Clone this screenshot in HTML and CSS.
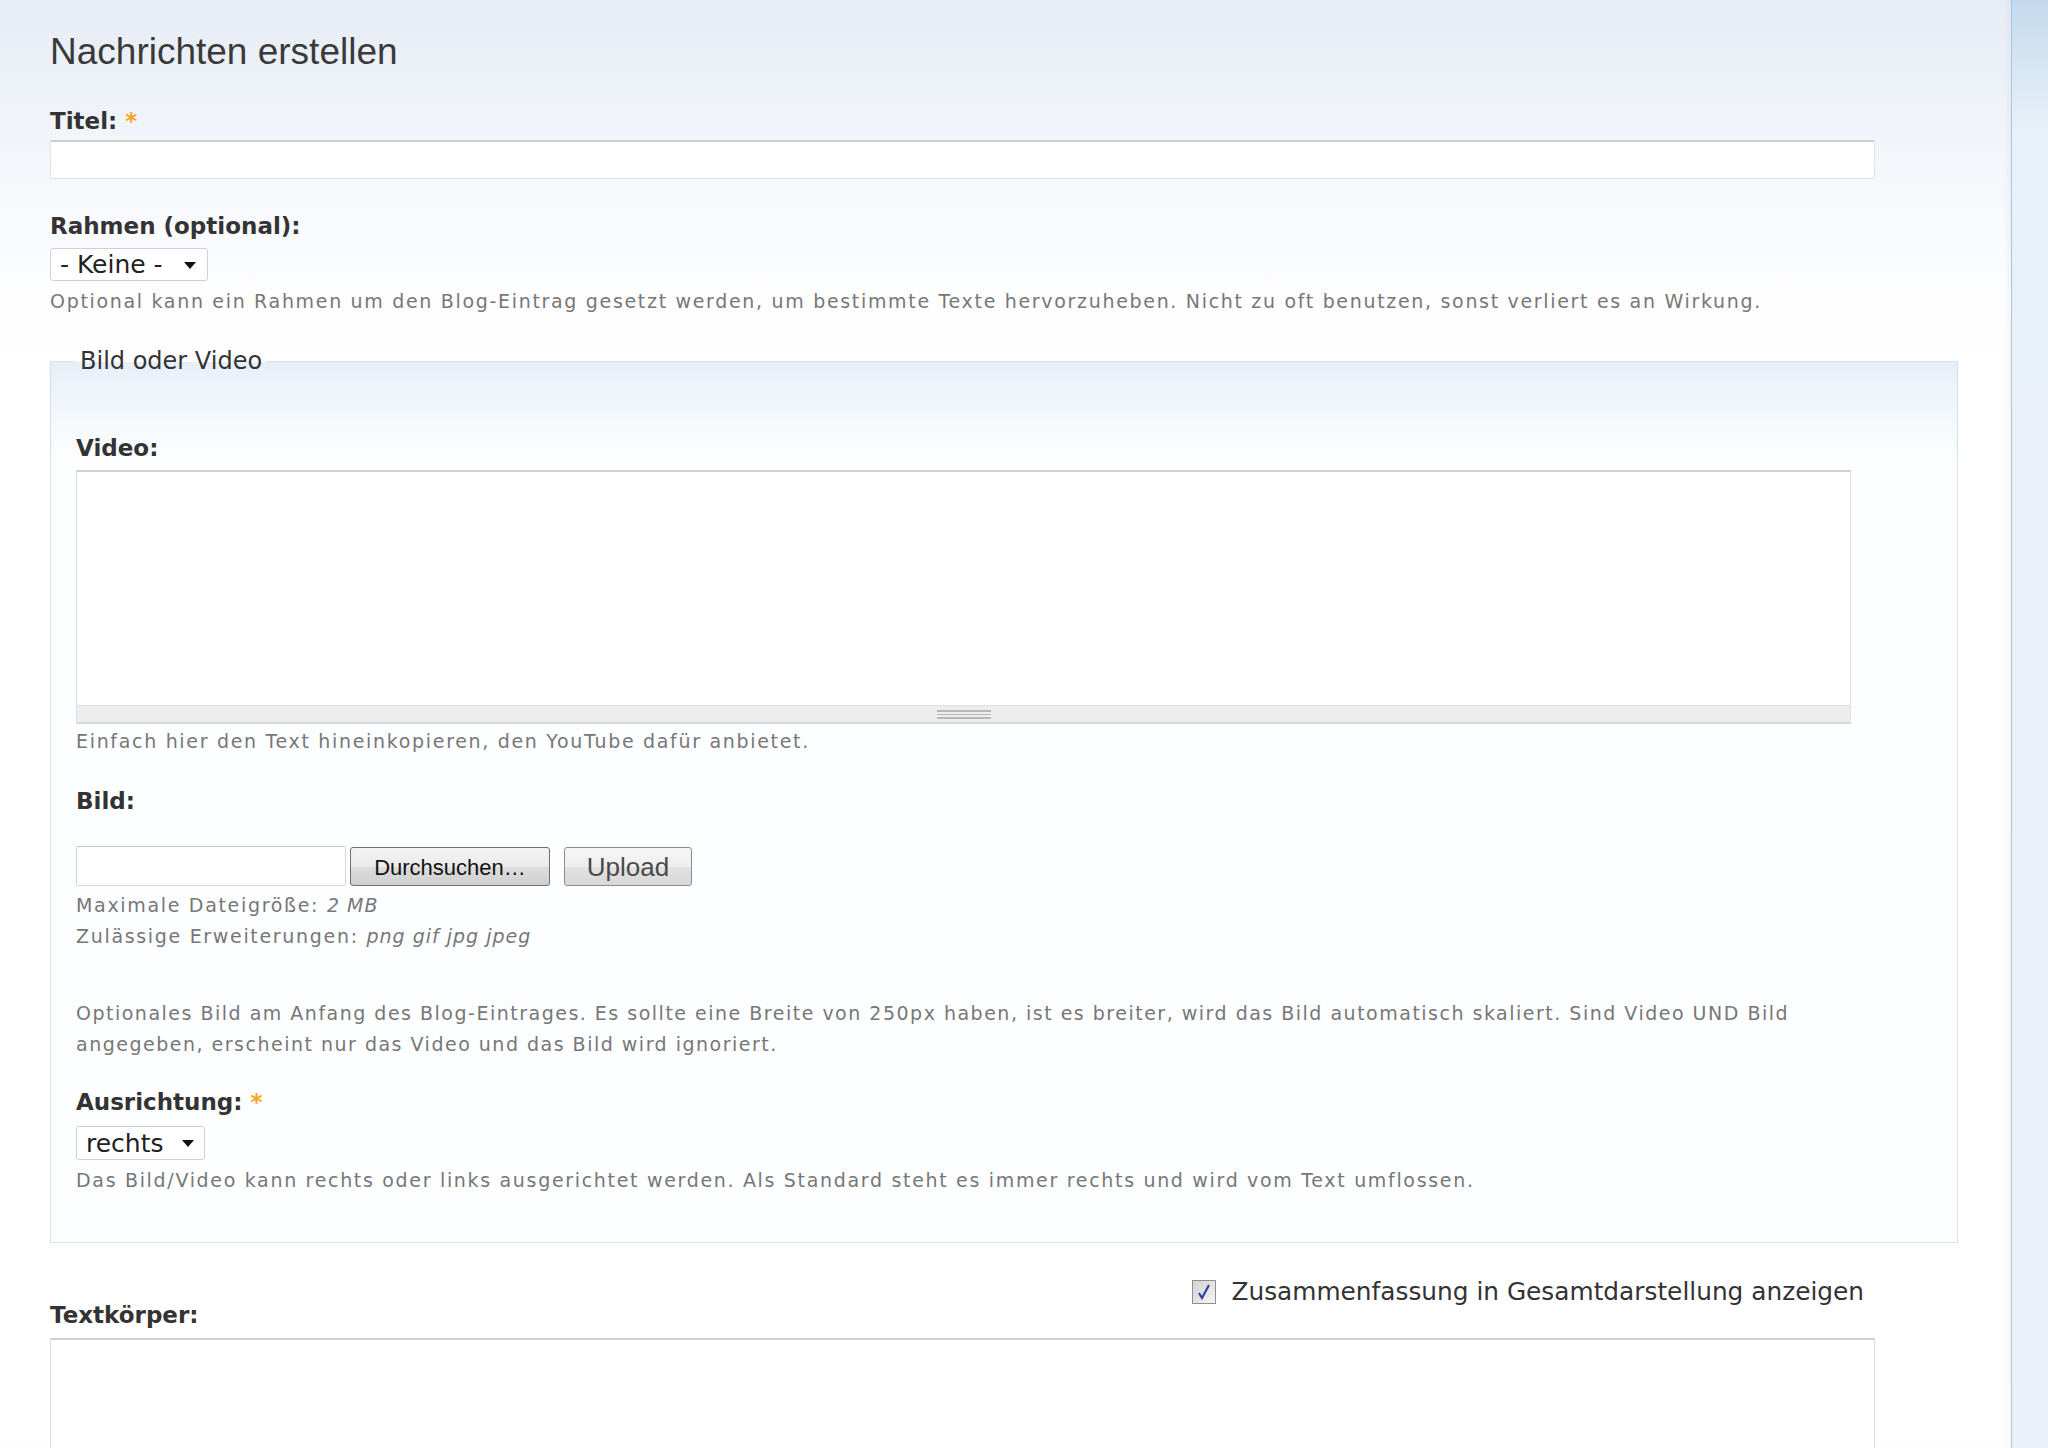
FILE: index.html
```html
<!DOCTYPE html>
<html lang="de">
<head>
    <meta charset="UTF-8">
    <title>Nachrichten erstellen</title>
    <link rel="stylesheet" href="styles.css">
</head>
<body>
    <div class="layout">
        <main class="content">
            <h1>Nachrichten erstellen</h1>

            <form class="node-form">
                <div class="form-item item-title">
                    <label>Titel: <span class="required">*</span></label>
                    <input type="text" class="form-text wide">
                </div>

                <div class="form-item item-frame">
                    <label>Rahmen (optional):</label>
                    <div class="select select-frame">
                        <span>- Keine -</span>
                        <svg width="12" height="8" viewBox="0 0 12 8"><path d="M0 1h12L6 8z" fill="#111"/></svg>
                    </div>
                    <div class="description">Optional kann ein Rahmen um den Blog-Eintrag gesetzt werden, um bestimmte Texte hervorzuheben. Nicht zu oft benutzen, sonst verliert es an Wirkung.</div>
                </div>

                <fieldset class="group">
                    <legend>Bild oder Video</legend>

                    <div class="form-item item-video">
                        <label>Video:</label>
                        <textarea class="form-textarea video-text"></textarea>
                        <div class="grippie"><span></span></div>
                        <div class="description">Einfach hier den Text hineinkopieren, den YouTube dafür anbietet.</div>
                    </div>

                    <div class="form-item item-image">
                        <label>Bild:</label>
                        <div class="upload-row">
                            <div class="file-box"></div>
                            <button type="button" class="btn-browse">Durchsuchen…</button>
                            <button type="button" class="btn-upload">Upload</button>
                        </div>
                        <div class="description">
                            Maximale Dateigröße: <em>2 MB</em><br>
                            Zulässige Erweiterungen: <em>png gif jpg jpeg</em>
                        </div>
                        <div class="description long-desc">Optionales Bild am Anfang des Blog-Eintrages. Es sollte eine Breite von 250px haben, ist es breiter, wird das Bild automatisch skaliert. Sind Video UND Bild angegeben, erscheint nur das Video und das Bild wird ignoriert.</div>
                    </div>

                    <div class="form-item item-align">
                        <label>Ausrichtung: <span class="required">*</span></label>
                        <div class="select select-align">
                            <span>rechts</span>
                            <svg width="12" height="8" viewBox="0 0 12 8"><path d="M0 1h12L6 8z" fill="#111"/></svg>
                        </div>
                        <div class="description">Das Bild/Video kann rechts oder links ausgerichtet werden. Als Standard steht es immer rechts und wird vom Text umflossen.</div>
                    </div>
                </fieldset>

                <div class="body-head">
                    <label>Textkörper:</label>
                    <div class="teaser-check">
                        <span class="checkbox">
                            <svg width="14" height="16" viewBox="0 0 14 16"><path d="M2 9l3 5L12 1" fill="none" stroke="#3340a0" stroke-width="2.2"/></svg>
                        </span>
                        <span>Zusammenfassung in Gesamtdarstellung anzeigen</span>
                    </div>
                </div>
                <textarea class="form-textarea body-text"></textarea>
            </form>
        </main>
        <aside class="sidebar"></aside>
    </div>
</body>
</html>
```

FILE: styles.css
```css
html, body {
    margin: 0;
    height: 100%;
    overflow: hidden;
}

body {
    font-family: 'DejaVu Sans', Verdana, sans-serif;
    color: #333;
    background: #fff;
}

.layout {
    display: flex;
    height: 1448px;
}

.content {
    flex: 1;
    padding: 30px 0 0 50px;
    background: linear-gradient(#e7edf6 0px, #f4f7fb 170px, #fefeff 300px, #fff 420px);
    box-shadow: inset -6px 0 6px -4px rgba(120, 150, 180, 0.12);
}

.sidebar {
    width: 36px;
    border-left: 1px solid #a9c5df;
    background: linear-gradient(#c3d9ed 0px, #dbe8f4 80px, #e8f0f8 130px, #eaf1f8 100%);
}

h1 {
    margin: 0;
    font-family: 'Liberation Sans', Arial, sans-serif;
    font-size: 37px;
    font-weight: normal;
    line-height: 44px;
    color: #3a3a3a;
}

/* Form items */
.form-item label,
.body-head label {
    display: block;
    font-weight: bold;
    font-size: 23px;
    line-height: 28px;
    color: #333;
}

.required {
    color: #f6a623;
}

.item-title { margin-top: 33px; }
.item-title label { margin-bottom: 5px; }

.item-frame { margin-top: 33px; }
.item-frame label { margin-bottom: 8px; }

.form-text {
    box-sizing: border-box;
    display: block;
    height: 39px;
    border: 1px solid #e2e2e2;
    border-top: 2px solid #cdcdcd;
    border-radius: 2px;
    background: #fff;
}

.wide {
    width: 1825px;
}

.description {
    font-size: 19px;
    line-height: 31px;
    letter-spacing: 1.68px;
    color: #777;
    margin-top: 5px;
}

.description em {
    font-style: italic;
    letter-spacing: 1px;
}

/* Fake selects */
.select {
    box-sizing: border-box;
    display: flex;
    align-items: center;
    justify-content: space-between;
    background: #fff;
    border: 1px solid #d0d0d0;
    border-radius: 3px;
    font-size: 25px;
    color: #222;
}

.select-frame {
    width: 158px;
    height: 33px;
    padding: 0 11px 0 9px;
}

.select-align {
    width: 129px;
    height: 34px;
    padding: 0 10px 0 9px;
}

/* Fieldset */
.group {
    margin: 30px 0 0 0;
    width: 1908px;
    box-sizing: border-box;
    padding: 0 25px 46px 25px;
    border: 1px solid #d3e2f0;
    background: linear-gradient(#e6eff8 0px, #f5f9fc 60px, #fdfeff 100px);
}

.group legend {
    padding: 0 4px;
    font-size: 24px;
    line-height: 28px;
    margin-top: 2px;
    color: #333;
}

.item-video { margin-top: 59px; }
.item-video label { margin-bottom: 8px; }

.form-textarea {
    box-sizing: border-box;
    display: block;
    resize: none;
    border: 1px solid #e0e0e0;
    border-top: 2px solid #d0d0d0;
    background: #fff;
    margin: 0;
}

.video-text {
    width: 1775px;
    height: 235px;
    border-bottom: none;
}

.grippie {
    box-sizing: border-box;
    width: 1775px;
    height: 19px;
    display: flex;
    align-items: center;
    justify-content: center;
    background: #ededed;
    border: 1px solid #e0e0e0;
    border-bottom: 2px solid #d8d8d8;
}

.grippie span {
    width: 54px;
    height: 9px;
    border-top: 2px solid #b8b8b8;
    border-bottom: 2px solid #b8b8b8;
    box-sizing: border-box;
    background: linear-gradient(transparent 2px, #b8b8b8 2px, #b8b8b8 3.5px, transparent 3.5px);
}

.item-video .description { margin-top: 2px; }

.item-image { margin-top: 30px; }
.item-image label { margin-bottom: 31px; }

.upload-row {
    display: flex;
    align-items: center;
    height: 40px;
}

.file-box {
    width: 270px;
    height: 40px;
    box-sizing: border-box;
    border: 1px solid #d6d6d6;
    border-top-color: #c4c4c4;
    border-radius: 2px;
    background: #fff;
    margin-right: 4px;
}

.btn-browse,
.btn-upload {
    box-sizing: border-box;
    height: 39px;
    border-radius: 3px;
    font-family: 'Liberation Sans', Arial, sans-serif;
    padding: 3px 0 0 0;
}

.btn-browse {
    width: 200px;
    border: 1px solid #6f6f6f;
    background: linear-gradient(#f3f3f3 0%, #ebebeb 50%, #dddddd 51%, #cfcfcf 100%);
    font-size: 22px;
    color: #111;
}

.btn-upload {
    width: 128px;
    margin-left: 14px;
    border: 1px solid #8c8c8c;
    background: linear-gradient(#f6f6f6 0%, #eeeeee 50%, #e2e2e2 51%, #d8d8d8 100%);
    font-size: 26px;
    color: #4a4a4a;
}

.item-image .description { margin-top: 4px; }
.item-image .long-desc {
    max-width: 1822px;
    margin-top: 46px;
    letter-spacing: 1.5px;
}

.item-align { margin-top: 28px; }
.item-align label { margin-bottom: 10px; }

/* Body field */
.body-head {
    width: 1825px;
    margin-top: 34px;
    display: flex;
    justify-content: space-between;
    align-items: flex-start;
}

.body-head label {
    margin-top: 24px;
}

.teaser-check {
    display: flex;
    align-items: center;
    gap: 15px;
    padding-right: 11px;
    font-size: 24.8px;
    line-height: 30px;
    color: #333;
}

.checkbox {
    box-sizing: border-box;
    width: 24px;
    height: 24px;
    display: flex;
    align-items: center;
    justify-content: center;
    border: 1px solid #8e8f8f;
    background: linear-gradient(135deg, #d2d2d2, #f4f4f4);
}

.body-text {
    width: 1825px;
    height: 220px;
    margin-top: 9px;
}
```
